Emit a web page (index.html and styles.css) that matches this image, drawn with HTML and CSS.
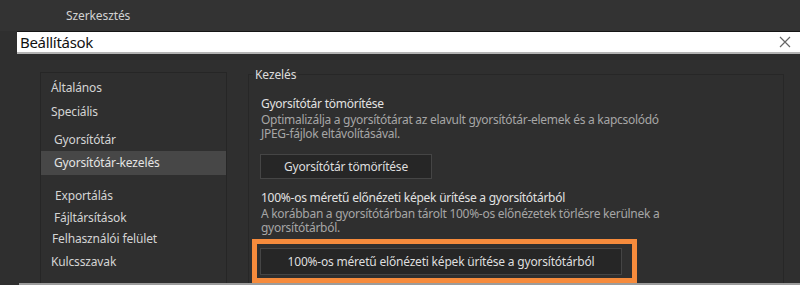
FILE: index.html
```html
<!DOCTYPE html>
<html lang="hu">
<head>
<meta charset="utf-8">
<title>Beállítások</title>
<link rel="stylesheet" href="styles.css">
</head>
<body>
<div class="topbar"><span class="menu">Szerkesztés</span></div>
<div class="searchrow">
  <div class="search">
    <span class="search-text">Beállítások</span>
    <svg class="close" width="12" height="12" viewBox="0 0 12 12"><path d="M1 1L11 11M11 1L1 11" stroke="#666" stroke-width="1.2" fill="none"/></svg>
  </div>
</div>
<div class="main">
  <nav class="nav">
    <div class="item i-gen">Általános</div>
    <div class="item i-spec">Speciális</div>
    <div class="item i-cache sub">Gyorsítótár</div>
    <div class="item i-cm sub selected">Gyorsítótár-kezelés</div>
    <div class="item i-exp sub2">Exportálás</div>
    <div class="item i-fa sub">Fájltársítások</div>
    <div class="item i-ui sub3">Felhasználói felület</div>
    <div class="item i-kw">Kulcsszavak</div>
  </nav>
  <fieldset class="group">
    <legend>Kezelés</legend>
    <div class="section">
      <div class="title">Gyorsítótár tömörítése</div>
      <div class="desc">Optimalizálja a gyorsítótárat az elavult gyorsítótár-elemek és a kapcsolódó<br>JPEG-fájlok eltávolításával.</div>
      <button class="btn btn-compact">Gyorsítótár tömörítése</button>
    </div>
    <div class="section s2">
      <div class="title">100%-os méretű előnézeti képek ürítése a gyorsítótárból</div>
      <div class="desc">A korábban a gyorsítótárban tárolt 100%-os előnézetek törlésre kerülnek a<br>gyorsítótárból.</div>
      <button class="btn btn-purge">100%-os méretű előnézeti képek ürítése a gyorsítótárból</button>
    </div>
  </fieldset>
</div>
<div class="bottomline"></div>
</body>
</html>
```
FILE: styles.css
```css
html, body {
  margin: 0;
  padding: 0;
}
body {
  width: 800px;
  height: 285px;
  overflow: hidden;
  background: #2f2f2f;
  font-family: "Noto Sans", "Open Sans", sans-serif;
  font-size: 12px;
  color: #dcdcdc;
  position: relative;
}
.topbar {
  height: 31px;
  background: #333333;
  box-sizing: border-box;
  padding-left: 66px;
  display: flex;
  align-items: center;
}
.menu {
  color: #d2d2d2;
  font-size: 12px;
  letter-spacing: -0.1px;
}
.searchrow {
  padding-left: 17px;
  background: #2f2f2f;
}
.search {
  height: 23px;
  box-sizing: border-box;
  background: #ffffff;
  border-top: 1px solid #151515;
  border-bottom: 2px solid #b4b4b4;
  display: flex;
  align-items: center;
  padding-left: 3px;
  padding-right: 9px;
}
.search-text {
  flex: 1;
  color: #111;
  font-size: 15px;
  letter-spacing: -0.3px;
}
.close {
  display: block;
}
.main {
  display: flex;
  align-items: flex-start;
  padding-top: 18px;
  padding-left: 40px;
}
.nav {
  width: 187px;
  height: 214px;
  box-sizing: border-box;
  border: 1px solid #262626;
  padding-top: 4px;
}
.item {
  height: 22px;
  line-height: 22px;
  padding-left: 10px;
  color: #d4d4d4;
  letter-spacing: -0.15px;
}
.item.sub { padding-left: 13px; }
.item.sub2 { padding-left: 14px; }
.item.sub3 { padding-left: 11px; }
.i-spec { margin-top: 2px; }
.i-cache { margin-top: 6px; }
.i-cm { margin-top: 0; height: 24px; line-height: 24px; }
.i-exp { margin-top: 10px; }
.i-fa { margin-top: 0; }
.i-ui { margin-top: -1px; }
.i-kw { margin-top: 1px; }
.selected {
  background: #474747;
  color: #e4e4e4;
}
.group {
  margin: 0 0 0 21px;
  width: 536px;
  height: 230px;
  box-sizing: border-box;
  border: 1px solid #272727;
  padding: 13px 0 0 12px;
  margin-top: -6px;
}
.group legend {
  padding: 0 2px;
  margin-left: -8px;
  color: #dcdcdc;
  letter-spacing: -0.1px;
}
.title {
  color: #e2e2e2;
  line-height: 15px;
  letter-spacing: -0.25px;
}
.desc {
  color: #a6a6a6;
  line-height: 14px;
  margin-top: 2px;
  letter-spacing: -0.28px;
}
.btn {
  display: block;
  font-family: inherit;
  font-size: 12px;
  color: #dedede;
  background: #262626;
  border: 1px solid #454545;
  letter-spacing: -0.2px;
  padding: 0;
  margin-left: -1px;
}
.btn-compact {
  width: 172px;
  height: 25px;
  margin-top: 13px;
}
.s2 { margin-top: 11px; }
.btn-purge {
  position: relative;
  width: 362px;
  height: 27px;
  margin-top: 13px;
}
.btn-purge::after {
  content: "";
  position: absolute;
  left: -9px;
  right: -16px;
  top: -10px;
  bottom: -9px;
  border: 5px solid #f68b3c;
}
.bottomline {
  position: absolute;
  left: 19px;
  right: 0;
  bottom: 0;
  height: 2px;
  background: #9c9c9c;
}
```
